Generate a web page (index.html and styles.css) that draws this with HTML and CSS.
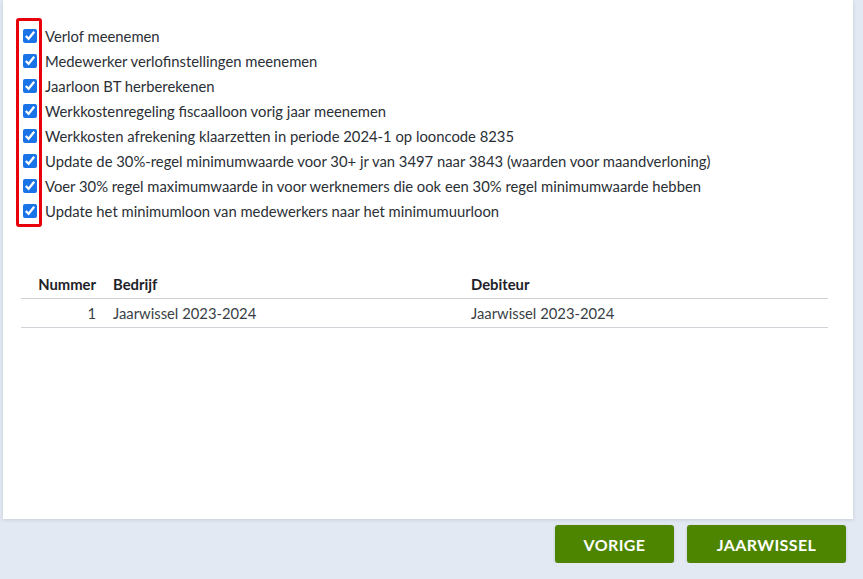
FILE: index.html
```html
<!DOCTYPE html>
<html lang="nl">
<head>
<meta charset="UTF-8">
<meta name="viewport" content="width=device-width, initial-scale=1.0">
<title>Jaarwissel</title>
<link rel="stylesheet" href="styles.css">
</head>
<body>
  <div class="panel">
    <div class="options">
      <div class="highlight"></div>
      <label class="option"><input type="checkbox" checked> Verlof meenemen</label>
      <label class="option"><input type="checkbox" checked> Medewerker verlofinstellingen meenemen</label>
      <label class="option"><input type="checkbox" checked> Jaarloon BT herberekenen</label>
      <label class="option"><input type="checkbox" checked> Werkkostenregeling fiscaalloon vorig jaar meenemen</label>
      <label class="option"><input type="checkbox" checked> Werkkosten afrekening klaarzetten in periode 2024-1 op looncode 8235</label>
      <label class="option"><input type="checkbox" checked> Update de 30%-regel minimumwaarde voor 30+ jr van 3497 naar 3843 (waarden voor maandverloning)</label>
      <label class="option"><input type="checkbox" checked> Voer 30% regel maximumwaarde in voor werknemers die ook een 30% regel minimumwaarde hebben</label>
      <label class="option"><input type="checkbox" checked> Update het minimumloon van medewerkers naar het minimumuurloon</label>
    </div>

    <table class="companies">
      <thead>
        <tr>
          <th class="num">Nummer</th>
          <th class="company">Bedrijf</th>
          <th>Debiteur</th>
        </tr>
      </thead>
      <tbody>
        <tr>
          <td class="num">1</td>
          <td class="company">Jaarwissel 2023-2024</td>
          <td>Jaarwissel 2023-2024</td>
        </tr>
      </tbody>
    </table>
  </div>

  <div class="actions">
    <button class="btn btn-prev">Vorige</button>
    <button class="btn btn-next">Jaarwissel</button>
  </div>
</body>
</html>
```

FILE: styles.css
```css
body {
  margin: 0;
  background-color: #e3e9f2;
  font-family: "Source Sans Pro", Lato, "Liberation Sans", sans-serif;
  font-size: 14.8px;
  color: #2b2f36;
}
.panel {
  margin-left: 3px;
  width: 850px;
  height: 519px;
  background-color: #fff;
  box-shadow: 0 1px 4px rgba(40, 60, 100, 0.15);
  padding-top: 23px;
  box-sizing: border-box;
}
.options {
  position: relative;
  padding-left: 20px;
}
.highlight {
  position: absolute;
  left: 13px;
  top: -5px;
  width: 20px;
  height: 203px;
  border: 3px solid #e8000b;
  border-radius: 3px;
}
.option {
  display: flex;
  align-items: center;
  height: 25px;
  gap: 8px;
}
.option input {
  margin: 0;
  width: 14px;
  height: 14px;
  accent-color: #1a74e8;
}
.companies {
  margin: 46px 0 0 18px;
  width: 807px;
  border-collapse: collapse;
}
.companies th {
  text-align: left;
  font-weight: bold;
  color: #1e2228;
  height: 29px;
  padding: 0;
  border-bottom: 1px solid #cfd2d6;
}
.companies td {
  height: 28px;
  padding: 0;
  border-bottom: 1px solid #cfd2d6;
  color: #3a3f47;
}
.companies .num {
  text-align: right;
  width: 75px;
  padding-right: 17px;
}
.companies .company {
  width: 358px;
}
.actions {
  display: flex;
  justify-content: flex-end;
  gap: 13px;
  width: 846px;
  margin-top: 6px;
}
.btn {
  height: 38px;
  border: none;
  border-radius: 3px;
  background-color: #4e8500;
  color: #fff;
  font-family: inherit;
  font-size: 16px;
  font-weight: bold;
  letter-spacing: 0.4px;
  text-transform: uppercase;
  box-shadow: 0 1px 3px rgba(40, 60, 100, 0.2);
  cursor: pointer;
}
.btn-prev {
  width: 119px;
}
.btn-next {
  width: 159px;
}
```
